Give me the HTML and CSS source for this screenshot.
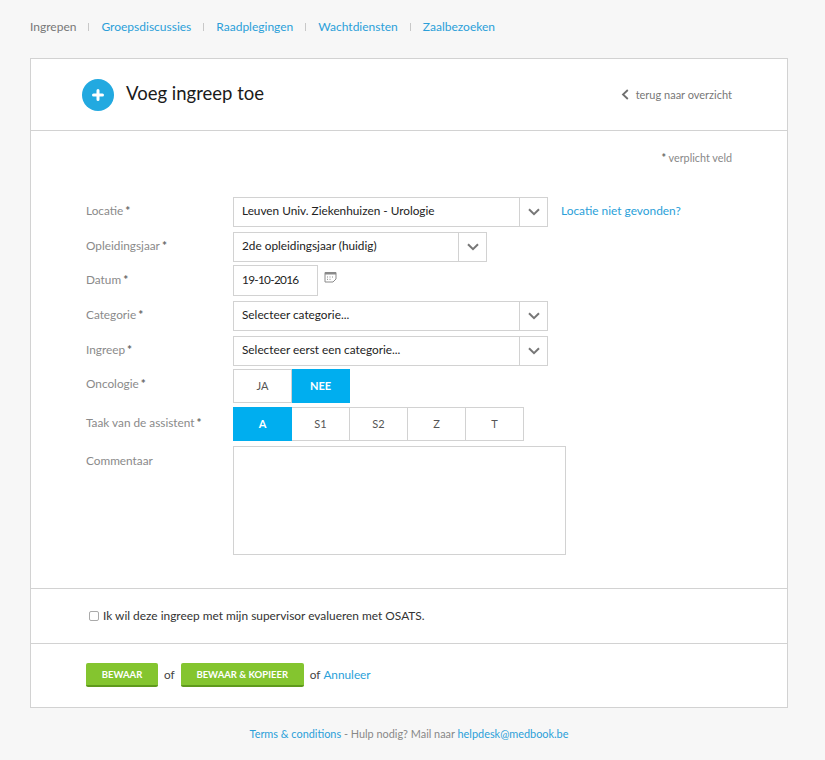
FILE: index.html
```html
<!DOCTYPE html>
<html lang="nl">
<head>
<meta charset="utf-8">
<title>Voeg ingreep toe</title>
<link rel="stylesheet" href="styles.css">
</head>
<body>
<nav class="tabs">
  <span class="tab current">Ingrepen</span><span class="sep"></span>
  <a class="tab" href="#">Groepsdiscussies</a><span class="sep"></span>
  <a class="tab" href="#">Raadplegingen</a><span class="sep"></span>
  <a class="tab" href="#">Wachtdiensten</a><span class="sep"></span>
  <a class="tab" href="#">Zaalbezoeken</a>
</nav>
<main class="card">
  <header class="card-head">
    <div class="title-wrap">
      <span class="plus"><svg width="14" height="14" viewBox="0 0 14 14"><path d="M7 2.5v9M2.5 7h9" stroke="#fff" stroke-width="3" fill="none" stroke-linecap="round"/></svg></span>
      <h1 class="title">Voeg ingreep toe</h1>
    </div>
    <a class="back" href="#"><svg width="8" height="11" viewBox="0 0 8 11"><path d="M6.8 1 2 5.5 6.8 10" stroke="#6f6f6f" stroke-width="1.8" fill="none"/></svg><span>terug naar overzicht</span></a>
  </header>
  <section class="form-part">
    <p class="req-note"><b>*</b> verplicht veld</p>
    <div class="form-grid">
      <div class="label">Locatie<b>*</b></div>
      <div class="field"><div class="select w-lg"><span class="val">Leuven Univ. Ziekenhuizen - Urologie</span><span class="caret"><svg width="12" height="8" viewBox="0 0 12 8"><path d="M1 1.2 6 6.2 11 1.2" stroke="#777" stroke-width="2" fill="none"/></svg></span></div><a class="loc-link" href="#">Locatie niet gevonden?</a></div>

      <div class="label">Opleidingsjaar<b>*</b></div>
      <div class="field"><div class="select w-md"><span class="val">2de opleidingsjaar (huidig)</span><span class="caret"><svg width="12" height="8" viewBox="0 0 12 8"><path d="M1 1.2 6 6.2 11 1.2" stroke="#777" stroke-width="2" fill="none"/></svg></span></div></div>

      <div class="label label-low">Datum<b>*</b></div>
      <div class="field"><div class="date">19-10-2016</div><svg class="cal" width="13" height="12" viewBox="0 0 13 12"><path d="M1 1.5h11v6.5l-3 3H1z" fill="#fff" stroke="#8a8a8a"/><path d="M1 1.5h11v2H1z" fill="#8a8a8a"/><path d="M3 6h1M5.5 6h1M8 6h1M3 8.3h1M5.5 8.3h1" stroke="#8a8a8a"/></svg></div>

      <div class="label">Categorie<b>*</b></div>
      <div class="field"><div class="select w-lg"><span class="val">Selecteer categorie...</span><span class="caret"><svg width="12" height="8" viewBox="0 0 12 8"><path d="M1 1.2 6 6.2 11 1.2" stroke="#777" stroke-width="2" fill="none"/></svg></span></div></div>

      <div class="label">Ingreep<b>*</b></div>
      <div class="field"><div class="select w-lg"><span class="val">Selecteer eerst een categorie...</span><span class="caret"><svg width="12" height="8" viewBox="0 0 12 8"><path d="M1 1.2 6 6.2 11 1.2" stroke="#777" stroke-width="2" fill="none"/></svg></span></div></div>

      <div class="label label-low">Oncologie<b>*</b></div>
      <div class="field"><div class="toggle"><span class="opt">JA</span><span class="opt on">NEE</span></div></div>

      <div class="label label-lower">Taak van de assistent<b>*</b></div>
      <div class="field"><div class="toggle"><span class="opt on">A</span><span class="opt">S1</span><span class="opt">S2</span><span class="opt">Z</span><span class="opt">T</span></div></div>

      <div class="label label-low">Commentaar</div>
      <div class="field"><div class="textarea"></div></div>
    </div>
  </section>
  <section class="check-part">
    <span class="checkbox"></span><span class="check-text">Ik wil deze ingreep met mijn supervisor evalueren met OSATS.</span>
  </section>
  <section class="action-part">
    <a class="btn b-save" href="#">BEWAAR</a><span class="of">of</span><a class="btn b-copy" href="#">BEWAAR &amp; KOPIEER</a><span class="of of-2">of</span><a class="cancel" href="#">Annuleer</a>
  </section>
</main>
<footer class="foot"><a href="#">Terms &amp; conditions</a> - Hulp nodig? Mail naar <a href="#">helpdesk@medbook.be</a></footer>
</body>
</html>
```
FILE: styles.css
```css
* { box-sizing: border-box; }
html, body { margin: 0; padding: 0; }
body { width: 825px; height: 760px; overflow: hidden; background: #f7f7f7; font-family: Lato, "Liberation Sans", sans-serif; color: #222; font-size: 12px; }
a { color: #2b9fd9; text-decoration: none; }

.tabs { display: flex; align-items: center; height: 58px; padding: 0 0 5px 30px; font-size: 12px; }
.tab.current { color: #777; }
.sep { width: 1px; height: 8px; background: #c8c8c8; margin: 0 12px; }

.card { width: 758px; height: 650px; margin-left: 30px; background: #fff; border: 1px solid #d2d2d2; display: flex; flex-direction: column; }
.card-head { height: 72px; flex: none; border-bottom: 1px solid #d2d2d2; display: flex; align-items: center; justify-content: space-between; padding: 0 55px 0 51px; }
.title-wrap { display: flex; align-items: center; gap: 12px; }
.plus { width: 32px; height: 32px; border-radius: 50%; background: #22a9e0; display: flex; align-items: center; justify-content: center; }
.title { margin: 0 0 4px; font-size: 18.5px; font-weight: 400; color: #1a1a1a; }
.back { display: flex; align-items: center; gap: 7px; color: #777; font-size: 11px; }

.form-part { height: 458px; flex: none; border-bottom: 1px solid #d2d2d2; padding: 20px 55px 0; }
.req-note { margin: 0; text-align: right; font-size: 10.8px; color: #888; line-height: 14px; }
.req-note b, .label b { font-weight: 700; margin-left: 2px; color: #666; }
.req-note b { margin-left: 0; }
.form-grid { margin-top: 32px; display: grid; grid-template-columns: 147px 1fr; grid-template-rows: 35px 33px 36px 35px 33px 38px 39px 109px; }
.label { color: #8a8a8a; font-size: 11.8px; line-height: 28px; }
.label-low { padding-top: 1px; }
.label-lower { padding-top: 2px; }
.field { display: flex; align-items: flex-start; }
.select { height: 30px; background: #fff; border: 1px solid #d2d2d2; display: flex; font-size: 11.8px; color: #222; }
.w-lg { width: 315px; }
.w-md { width: 254px; }
.val { flex: 1; line-height: 26px; padding-left: 8px; }
.caret { width: 28px; border-left: 1px solid #d2d2d2; display: flex; align-items: center; justify-content: center; }
.loc-link { margin-left: 13px; font-size: 11.9px; line-height: 28px; }
.date { width: 85px; height: 31px; background: #fff; border: 1px solid #d2d2d2; line-height: 28px; padding-left: 8px; font-size: 11.8px; letter-spacing: -0.7px; }
.cal { margin: 6px 0 0 6px; }
.toggle { display: flex; }
.opt { width: 59px; height: 34px; border: 1px solid #d2d2d2; display: flex; align-items: center; justify-content: center; font-size: 11px; color: #555; background: #fff; padding-bottom: 2px; }
.opt + .opt { width: 58px; border-left: 0; }
.opt.on { background: #00aeef; border-color: #00aeef; color: #fff; font-weight: 700; }
.textarea { width: 333px; height: 109px; background: #fff; border: 1px solid #d2d2d2; }

.check-part { height: 55px; flex: none; border-bottom: 1px solid #d2d2d2; display: flex; align-items: center; padding-left: 58px; font-size: 11.9px; color: #333; }
.checkbox { width: 10px; height: 10px; border: 1px solid #aaa; border-radius: 2px; background: #fff; margin-right: 4px; }
.check-text { margin-bottom: 2px; }
.action-part { flex: 1; display: flex; align-items: center; padding: 0 0 1px 55px; font-size: 11.8px; color: #444; }
.btn { height: 24px; background: #84c52f; border-bottom: 2px solid #5f9a1c; border-radius: 2px; color: #fff; font-size: 9.5px; font-weight: 700; display: flex; align-items: center; justify-content: center; }
.b-save { width: 72px; }
.b-copy { width: 123px; }
.of { margin: 0 6px 2px; }
.of-2 { margin: 0 3px 2px 6px; }
.cancel { margin-bottom: 2px; }
.foot { margin-top: 19px; padding-right: 7px; text-align: center; color: #888; font-size: 10.9px; }
```
